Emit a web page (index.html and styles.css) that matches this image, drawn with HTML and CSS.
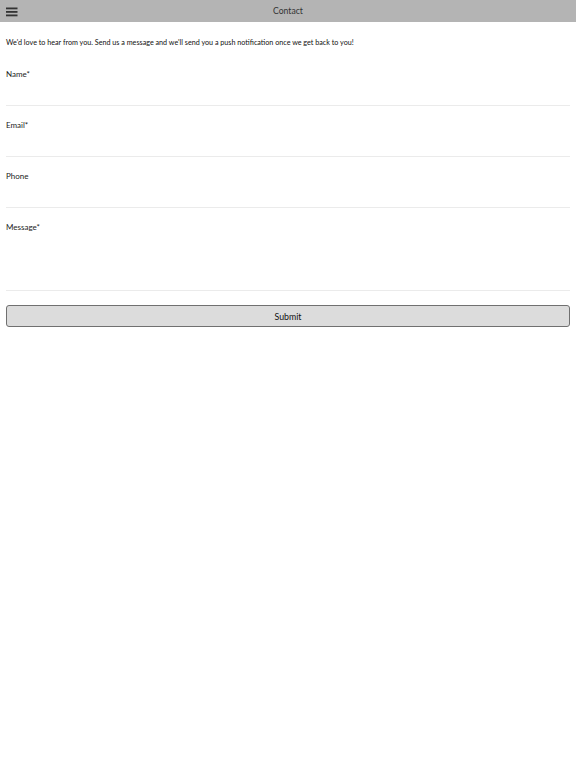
FILE: index.html
```html
<!DOCTYPE html>
<html>
<head>
<meta charset="utf-8">
<link rel="stylesheet" href="styles.css">
</head>
<body>
<header class="topbar">
  <span class="menu">
    <svg width="12" height="10" viewBox="0 0 12 10"><rect x="0" y="0.5" width="11.5" height="1.8" fill="#333"/><rect x="0" y="4" width="11.5" height="1.8" fill="#333"/><rect x="0" y="7.5" width="11.5" height="1.8" fill="#333"/></svg>
  </span>
  <span class="title">Contact</span>
</header>
<main class="content">
  <p class="intro">We'd love to hear from you. Send us a message and we'll send you a push notification once we get back to you!</p>
  <div class="field">
    <label class="label">Name*</label>
    <div class="input"></div>
  </div>
  <div class="field">
    <label class="label">Email*</label>
    <div class="input"></div>
  </div>
  <div class="field">
    <label class="label">Phone</label>
    <div class="input"></div>
  </div>
  <div class="field">
    <label class="label">Message*</label>
    <div class="input textarea"></div>
  </div>
  <button class="submit">Submit</button>
</main>
</body>
</html>
```
FILE: styles.css
```css
html, body { margin: 0; padding: 0; background: #fff; }
body { font-family: Lato, "Noto Sans", sans-serif; color: #111; }
.topbar {
  position: relative;
  height: 22px;
  background: #b4b4b4;
  display: flex;
  align-items: center;
  justify-content: center;
}
.menu {
  position: absolute;
  left: 6px;
  top: 7px;
  width: 12px;
  height: 10px;
  display: flex;
}
.title { font-size: 8.6px; color: #333; }
.content { padding: 0 6px; display: flex; flex-direction: column; }
.intro {
  margin: 15px 0 0;
  font-size: 7.2px;
  line-height: 12px;
  color: #111;
}
.field { display: flex; flex-direction: column; margin-top: 13px; }
.field:first-of-type { margin-top: 19px; }
.label { font-size: 8px; line-height: 12px; color: #222; }
.input { height: 25px; border-bottom: 1px solid #ebebeb; }
.textarea { height: 57px; }
.submit {
  margin-top: 14px;
  height: 22px;
  width: 100%;
  background: #dcdcdc;
  border: 1px solid #707070;
  border-radius: 3px;
  font-family: Lato, "Noto Sans", sans-serif;
  font-size: 8.8px;
  color: #111;
  padding: 0;
}
```
